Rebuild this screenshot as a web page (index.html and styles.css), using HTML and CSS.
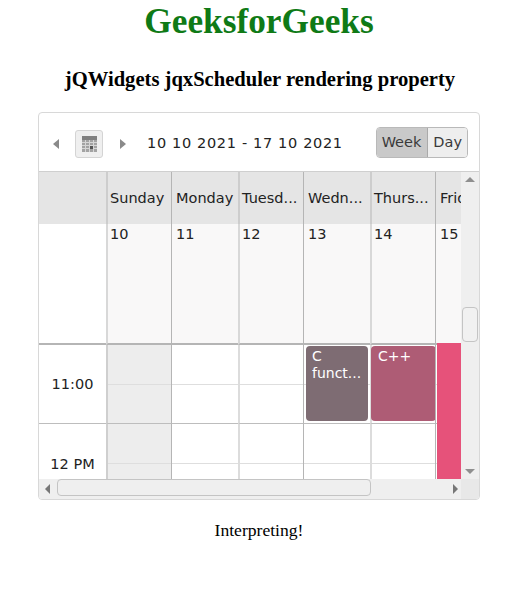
FILE: index.html
```html
<!DOCTYPE html>
<html>
<head>
<meta charset="utf-8">
<title>jqxScheduler rendering</title>
<link rel="stylesheet" href="styles.css">
</head>
<body>
<h1 class="brand">GeeksforGeeks</h1>
<h3 class="subtitle">jQWidgets jqxScheduler rendering property</h3>
<div class="scheduler">
  <div class="toolbar">
    <svg class="arrow arrow-prev" viewBox="0 0 6 10"><path d="M6 0V10L0 5Z"/></svg>
    <button class="cal-btn">
      <svg viewBox="0 0 15 16" width="15" height="16">
        <rect width="15" height="16" fill="#a3a3a3"/>
        <rect width="15" height="4" fill="#808080"/>
        <path d="M0 6.5h15M0 9.5h15M0 12.5h15M3.5 4v12M7.5 4v12M11.5 4v12" stroke="#d6d6d6" stroke-width="1" fill="none"/>
        <rect x="8" y="10" width="3" height="3" fill="#555"/>
      </svg>
    </button>
    <svg class="arrow arrow-next" viewBox="0 0 6 10"><path d="M0 0V10L6 5Z"/></svg>
    <span class="range">10 10 2021 - 17 10 2021</span>
    <div class="views">
      <span class="view view-active">Week</span>
      <span class="view">Day</span>
    </div>
  </div>
  <div class="content">
    <div class="viewport">
      <div class="grid">
        <div class="head head-corner"></div>
        <div class="head">Sunday</div>
        <div class="head strong">Monday</div>
        <div class="head">Tuesd...</div>
        <div class="head strong">Wedn...</div>
        <div class="head">Thurs...</div>
        <div class="head strong">Friday</div>

        <div class="allday allday-corner"></div>
        <div class="allday">10</div>
        <div class="allday strong">11</div>
        <div class="allday">12</div>
        <div class="allday strong">13</div>
        <div class="allday">14</div>
        <div class="allday strong">15</div>

        <div class="time">11:00</div>
        <div class="slot slot-off"></div>
        <div class="slot strong"></div>
        <div class="slot"></div>
        <div class="slot strong"><div class="event event-c">C funct...</div></div>
        <div class="slot"><div class="event event-cpp">C++</div></div>
        <div class="slot strong"><div class="event-long"></div></div>

        <div class="time">12 PM</div>
        <div class="slot slot-off"></div>
        <div class="slot strong"></div>
        <div class="slot"></div>
        <div class="slot strong"></div>
        <div class="slot"></div>
        <div class="slot strong"></div>
      </div>
    </div>
    <div class="vbar">
      <svg class="bar-arrow" viewBox="0 0 10 5"><path d="M0 5H10L5 0Z"/></svg>
      <div class="vtrack"><div class="vthumb"></div></div>
      <svg class="bar-arrow" viewBox="0 0 10 5"><path d="M0 0H10L5 5Z"/></svg>
    </div>
    <div class="hbar">
      <svg class="bar-arrow-h" viewBox="0 0 5 10"><path d="M5 0V10L0 5Z"/></svg>
      <div class="hthumb"></div>
      <svg class="bar-arrow-h" viewBox="0 0 5 10"><path d="M0 0V10L5 5Z"/></svg>
    </div>
    <div class="corner"></div>
  </div>
</div>
<p class="note">Interpreting!</p>
</body>
</html>
```

FILE: styles.css
```css
* { box-sizing: border-box; }
html, body { margin: 0; padding: 0; background: #fff; }
body { width: 520px; height: 597px; overflow: hidden; font-family: "Liberation Serif", serif; color: #000; }

.brand {
  margin: 0;
  padding-right: 2px;
  height: 44px;
  line-height: 44px;
  text-align: center;
  font-size: 35.3px;
  font-weight: 700;
  color: #0f7a16;
}
.subtitle {
  margin: 0;
  padding-top: 23px;
  height: 68px;
  line-height: 24px;
  text-align: center;
  font-size: 20.6px;
  font-weight: 700;
}

.scheduler {
  width: 442px;
  height: 388px;
  margin-left: 38px;
  border: 1px solid #d8d8d8;
  border-radius: 4px;
  overflow: hidden;
  font-family: "DejaVu Sans", sans-serif;
  font-size: 14.5px;
  color: #222;
}

.toolbar {
  height: 58px;
  display: flex;
  align-items: center;
  padding: 4px 11px 0 14px;
}
.arrow { width: 6px; height: 10px; fill: #8a8a8a; }
.arrow-next { margin-left: 17px; }
.cal-btn {
  margin-left: 16px;
  width: 28px;
  height: 28px;
  padding: 0;
  display: flex;
  align-items: center;
  justify-content: center;
  background: #efefef;
  border: 1px solid #d4d4d4;
  border-radius: 3px;
}
.range { margin-left: 21px; letter-spacing: 0.66px; margin-top: -2px; }
.views {
  margin-left: auto;
  margin-bottom: 4px;
  display: flex;
  height: 31px;
  border: 1px solid #b9b9b9;
  border-radius: 4px;
  overflow: hidden;
}
.view {
  padding: 0 5px;
  line-height: 29px;
  background: #eeeeee;
  color: #3a3a3a;
}
.view-active { background: #c9c9c9; border-right: 1px solid #aaa; padding-right: 6px; }

.content {
  display: grid;
  grid-template-columns: 422px 18px;
  grid-template-rows: 307px 20px;
  border-top: 1px solid #cfcfcf;
}
.viewport { overflow: hidden; }
.grid {
  display: grid;
  grid-template-columns: 67px 65px 67px 65px 67px 65px 65px;
  grid-template-rows: 52px 121px 79px 80px;
  width: 421px;
}

.head {
  background: #e5e5e5;
  border-left: 2px solid #cdcdcd;
  padding-left: 2px;
  line-height: 52px;
  white-space: nowrap;
  overflow: hidden;
}
.head-corner { border-left: 0; }

.allday {
  background: #f9f8f8;
  border-left: 2px solid #d8d8d8;
  border-bottom: 2px solid #b5b5b5;
  padding-left: 2px;
  line-height: 20px;
}
.allday-corner { background: #fff; border-left: 0; }

.time {
  display: flex;
  align-items: center;
  justify-content: center;
  background: #fff;
  border-bottom: 1px solid #bdbdbd;
}
.slot {
  position: relative;
  border-left: 2px solid #dcdcdc;
  border-bottom: 1px solid #bdbdbd;
  background: linear-gradient(#fff 39px, #dedede 39px, #dedede 40px, #fff 40px);
}
.slot-off {
  border-left-color: #cfcfcf;
  background: linear-gradient(#ededed 39px, #dedede 39px, #dedede 40px, #ededed 40px);
}
.head.strong, .allday.strong, .slot.strong {
  border-left: 1px solid #b5b5b5;
  padding-left: 4px;
}
.slot.strong { padding-left: 0; }

.event {
  position: absolute;
  top: 1px;
  left: 2px;
  width: 62px;
  height: 75px;
  padding: 2px 6px;
  border-radius: 4px;
  line-height: 17px;
  color: #fff;
  font-size: 14px;
}
.event-c { background: #7e6c73; }
.event-cpp { background: #ae5c75; left: -1px; width: 65px; padding-left: 7px; }
.event-long {
  position: absolute;
  z-index: 1;
  top: -2px;
  left: 1px;
  width: 24px;
  height: 136px;
  background: #e6527a;
}

.vbar {
  display: flex;
  flex-direction: column;
  align-items: center;
  background: #efefef;
}
.bar-arrow { width: 10px; height: 5px; margin: 5px 0; fill: #8f8f8f; flex: none; }
.vtrack { flex: 1; width: 100%; padding: 120px 1px 0; }
.vthumb {
  width: 16px;
  height: 35px;
  background: #f1f1f1;
  border: 1px solid #c4c4c4;
  border-radius: 4px;
}
.hbar {
  display: flex;
  align-items: center;
  background: #efefef;
  padding: 0 3px 0 6px;
}
.bar-arrow-h { width: 5px; height: 10px; fill: #777; flex: none; }
.hthumb {
  width: 314px;
  height: 17px;
  margin: 0 auto 3px 7px;
  background: #efefef;
  border: 1px solid #c4c4c4;
  border-radius: 4px;
}
.corner { background: #e8e8e8; }

.note {
  margin: 0;
  padding: 19px 2px 0 0;
  text-align: center;
  font-size: 17.6px;
  line-height: 22px;
}
```
